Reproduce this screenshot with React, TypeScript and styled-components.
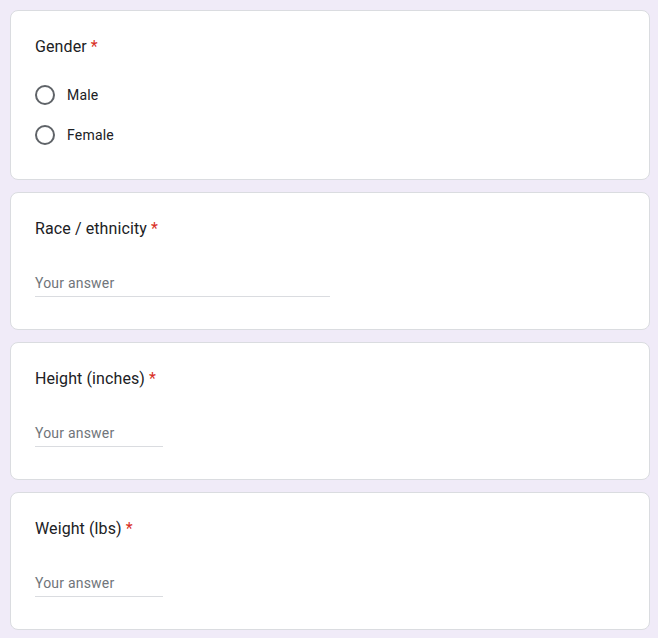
import React from "react";
import styled, { createGlobalStyle } from "styled-components";

const Global = createGlobalStyle`
  html, body { margin: 0; padding: 0; background: #f0ebf8; }
  body { font-family: Roboto, "Noto Sans", Arial, sans-serif; }
`;

const Page = styled.div`
  display: flex;
  flex-direction: column;
  gap: 12px;
  padding: 10px 8px 8px 10px;
  width: 640px;
`;

const Card = styled.section`
  background: #fff;
  border: 1px solid #dadce0;
  border-radius: 8px;
  padding: 24px 24px 24px 24px;
  display: flex;
  flex-direction: column;
`;

const Title = styled.div`
  font-size: 16px;
  line-height: 24px;
  letter-spacing: 0.1px;
  color: #202124;
  font-weight: 400;
`;

const Required = styled.span`
  color: #d93025;
  margin-left: 4px;
`;

const Options = styled.div`
  display: flex;
  flex-direction: column;
  margin-top: 16px;
`;

const Option = styled.label`
  display: flex;
  align-items: center;
  height: 40px;
  gap: 12px;
  font-size: 14px;
  color: #202124;
  letter-spacing: 0.2px;
`;

const Radio = styled.span`
  box-sizing: border-box;
  width: 20px;
  height: 20px;
  border: 2px solid #5f6368;
  border-radius: 50%;
  flex: none;
`;

const Field = styled.div<{ $width: number }>`
  margin-top: 24px;
  margin-bottom: 8px;
  width: ${(p) => p.$width}px;
  padding: 8px 0 3px;
  border-bottom: 1px solid #dadce0;
  font-size: 14px;
  line-height: 20px;
  color: #70757a;
  letter-spacing: 0.2px;
`;

type Q = { title: string; width: number };

const textQuestions: Q[] = [
  { title: "Race / ethnicity", width: 295 },
  { title: "Height (inches)", width: 128 },
  { title: "Weight (lbs)", width: 128 },
];

export default function App() {
  return (
    <>
      <Global />
      <Page>
        <Card>
          <Title>
            Gender<Required>*</Required>
          </Title>
          <Options>
            {["Male", "Female"].map((o) => (
              <Option key={o}>
                <Radio />
                {o}
              </Option>
            ))}
          </Options>
        </Card>
        {textQuestions.map((q) => (
          <Card key={q.title}>
            <Title>
              {q.title}
              <Required>*</Required>
            </Title>
            <Field $width={q.width}>Your answer</Field>
          </Card>
        ))}
      </Page>
    </>
  );
}
